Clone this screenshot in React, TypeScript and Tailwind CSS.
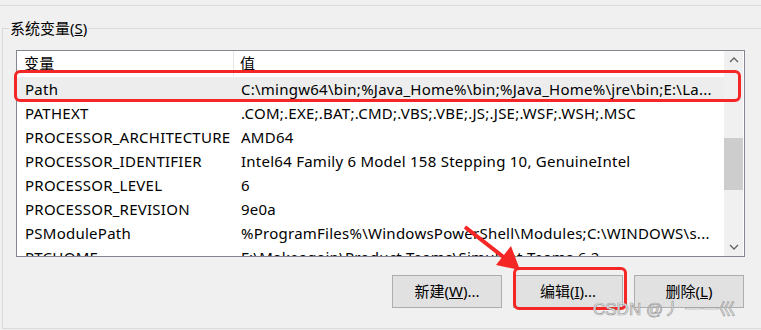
import React from "react";

const rows: [string, string][] = [
  ["Path", "C:\\mingw64\\bin;%Java_Home%\\bin;%Java_Home%\\jre\\bin;E:\\La..."],
  ["PATHEXT", ".COM;.EXE;.BAT;.CMD;.VBS;.VBE;.JS;.JSE;.WSF;.WSH;.MSC"],
  ["PROCESSOR_ARCHITECTURE", "AMD64"],
  ["PROCESSOR_IDENTIFIER", "Intel64 Family 6 Model 158 Stepping 10, GenuineIntel"],
  ["PROCESSOR_LEVEL", "6"],
  ["PROCESSOR_REVISION", "9e0a"],
  ["PSModulePath", "%ProgramFiles%\\WindowsPowerShell\\Modules;C:\\WINDOWS\\s..."],
  ["PTCHOME", "F:\\Makeagain\\Product Teams\\Simulant Teams 6.2"],
];

const font = {
  fontFamily: '"Noto Sans", "Noto Sans CJK SC", sans-serif',
};

function Chevron({ up }: { up: boolean }) {
  return (
    <svg width="10" height="6" viewBox="0 0 10 6">
      <polyline
        points={up ? "1,5 5,1 9,5" : "1,1 5,5 9,1"}
        fill="none"
        stroke="#606060"
        strokeWidth="1.3"
      />
    </svg>
  );
}

export default function App() {
  return (
    <div
      className="relative w-[761px] h-[330px] overflow-hidden bg-[#f0f0f0] text-black"
      style={font}
    >
      <div className="h-[5px]" />
      <div className="h-px bg-[#dadada]" />
      <div className="mt-[22px] ml-[2px] w-[800px] h-[301px] border-l border-t border-b border-[#dadada]">
        <div className="ml-[6px] -mt-[10px] w-fit px-[1px] bg-[#f0f0f0] text-[15px] leading-[19px]">
          系统变量(<span className="underline">S</span>)
        </div>
        <div className="ml-[13px] mt-[12px] w-[729px] h-[207px] border border-[#828790] bg-white flex overflow-hidden">
          <div className="flex-1 flex flex-col text-[15px] tracking-[0.25px]">
            <div className="h-[26px] flex shrink-0">
              <div className="w-[217px] h-[25px] pl-[7px] flex items-center border-r border-[#e5e5e5]">
                变量
              </div>
              <div className="pl-[6px] h-[25px] flex items-center">值</div>
            </div>
            {rows.map(([k, v], i) => (
              <div
                key={k}
                className={
                  "h-[24px] shrink-0 flex items-center whitespace-nowrap " +
                  (i === 0 ? "bg-[#ededed]" : "")
                }
              >
                <div className="w-[217px] pl-[8px]">{k}</div>
                <div className="pl-[7px]">{v}</div>
              </div>
            ))}
          </div>
          <div className="w-[20px] pr-px bg-white flex">
            <div className="flex-1 bg-[#f0f0f0] flex flex-col">
              <div className="h-[18px] flex items-center justify-center">
                <Chevron up />
              </div>
              <div className="h-[69px]" />
              <div className="h-[52px] bg-[#cdcdcd]" />
              <div className="flex-1" />
              <div className="h-[18px] flex items-center justify-center">
                <Chevron up={false} />
              </div>
            </div>
          </div>
        </div>
        <div className="ml-[13px] mt-[18px] w-[728px] flex justify-end gap-[11px] text-[15px]">
          <div className="w-[110px] h-[33px] bg-[#e1e1e1] border border-[#adadad] flex items-center justify-center">
            新建(<span className="underline">W</span>)...
          </div>
          <div className="w-[110px] h-[33px] bg-[#e1e1e1] border border-[#adadad] flex items-center justify-center">
            编辑(<span className="underline">I</span>)...
          </div>
          <div className="w-[110px] h-[33px] bg-[#e1e1e1] border border-[#adadad] flex items-center justify-center">
            删除(<span className="underline">L</span>)
          </div>
        </div>
      </div>

      {/* annotations */}
      <div className="absolute left-[14px] top-[70px] w-[727px] h-[32px] border-[3px] border-[#f42626] rounded-[6px]" />
      <div className="absolute left-[513px] top-[267px] w-[114px] h-[43px] border-[3px] border-[#f42626] rounded-[6px]" />
      <svg className="absolute left-0 top-0 pointer-events-none" width="761" height="330">
        <line x1="465" y1="227" x2="506" y2="259" stroke="#f42626" strokeWidth="4" />
        <polygon points="520,270 496,265 511,246" fill="#f42626" />
      </svg>
      <div
        className="absolute left-[593px] top-[299px] text-[17px] leading-[22px] text-[#f4f4f4] whitespace-nowrap [-webkit-text-stroke:0.7px_#9c9c9c]"
        style={{ fontFamily: '"Liberation Sans", "Noto Sans CJK SC", sans-serif' }}
      >
        CSDN @丿 一一巛
      </div>
    </div>
  );
}
